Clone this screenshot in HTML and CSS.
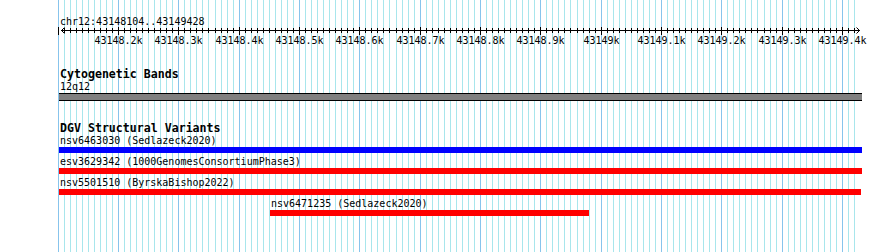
FILE: index.html
```html
<!DOCTYPE html>
<html lang="en">
<head>
  <meta charset="UTF-8" />
  <meta name="viewport" content="width=device-width, initial-scale=1.0" />
  <title>chr12:43148104..43149428</title>
  <link rel="stylesheet" href="styles.css">
</head>
<body>
  <div class="panel">
    <svg class="grid" id="grid" width="890" height="252"></svg>

    <div class="ruler">
      <div class="ref">chr12:43148104..43149428</div>
      <svg class="scale" id="scale" width="890" height="24"></svg>
    </div>

    <div class="track cyto">
      <div class="track-title">Cytogenetic Bands</div>
      <div class="label">12q12</div>
      <div class="band"></div>
    </div>

    <div class="track dgv">
      <div class="track-title">DGV Structural Variants</div>
      <div class="feature">
        <div class="label">nsv6463030 (Sedlazeck2020)</div>
        <div class="bar blue"></div>
      </div>
      <div class="feature">
        <div class="label">esv3629342 (1000GenomesConsortiumPhase3)</div>
        <div class="bar red"></div>
      </div>
      <div class="feature">
        <div class="label">nsv5501510 (ByrskaBishop2022)</div>
        <div class="bar red" style="width: 802px"></div>
      </div>
      <div class="feature" style="margin-left: 211px">
        <div class="label">nsv6471235 (Sedlazeck2020)</div>
        <div class="bar red" style="width: 319px"></div>
      </div>
    </div>
  </div>

  <script>
    const ns = 'http://www.w3.org/2000/svg';
    const grid = document.getElementById('grid');
    const scale = document.getElementById('scale');
    const x0 = 118;           // 43148.2k
    const step = 60.33 / 10;  // 10 bp

    function line(svg, x1, y1, x2, y2, cls) {
      const l = document.createElementNS(ns, 'line');
      l.setAttribute('x1', x1); l.setAttribute('y1', y1);
      l.setAttribute('x2', x2); l.setAttribute('y2', y2);
      l.setAttribute('class', cls);
      svg.appendChild(l);
    }

    for (let k = -10; k <= 122; k++) {
      const x = Math.round(x0 + k * step) + 0.5;
      const major = k % 10 === 0;
      line(grid, x, 0, x, 252, major ? 'major' : 'minor');
      line(scale, x, major ? 3 : 4, x, major ? 11 : 9, 'tick');
      if (major && k >= 0) {
        const t = document.createElementNS(ns, 'text');
        t.setAttribute('x', x);
        t.setAttribute('y', 20);
        t.textContent = +((43148200 + k * 10) / 1000).toFixed(1) + 'k';
        scale.appendChild(t);
      }
    }

    line(scale, 61, 6.5, 860, 6.5, 'axis');
    const arrows = document.createElementNS(ns, 'path');
    arrows.setAttribute('d', 'M64.5 3.5 L61.5 6.5 L64.5 9.5 M856.5 3.5 L859.5 6.5 L856.5 9.5');
    arrows.setAttribute('class', 'axis');
    scale.appendChild(arrows);
  </script>
</body>
</html>
```

FILE: styles.css
```css
body { margin: 0; background: #fff; font-family: "DejaVu Sans Mono", "Liberation Mono", monospace; color: #000; }
.panel { position: relative; width: 890px; height: 252px; overflow: hidden; }
.grid { position: absolute; left: 0; top: 0; }
.grid .minor { stroke: #a8e6ec; stroke-width: 1; }
.grid .major { stroke: #87c4ec; stroke-width: 1; }
.ruler, .track { position: relative; }
.ref { padding: 15px 0 0 60px; font-size: 10px; line-height: 13px; }
.scale { display: block; margin-top: -4px; }
.scale .tick, .scale .axis { stroke: #000; stroke-width: 1; fill: none; }
.scale text { font-family: "DejaVu Sans Mono", monospace; font-size: 10px; text-anchor: middle; fill: #000; }
.track { padding-left: 59px; }
.track-title { padding-left: 1px; font-weight: bold; font-size: 11.6px; line-height: 13px; }
.label { padding-left: 1px; font-size: 10px; line-height: 12px; white-space: nowrap; }
.cyto { margin-top: 20px; }
.band { width: 803px; height: 6px; background: #808080; border-top: 1px solid #000; border-bottom: 1px solid #000; }
.dgv { margin-top: 21px; }
.feature { margin-bottom: 3px; }
.bar { width: 803px; height: 6px; }
.bar.blue { background: #0000ff; }
.bar.red { background: #ff0000; }
```
